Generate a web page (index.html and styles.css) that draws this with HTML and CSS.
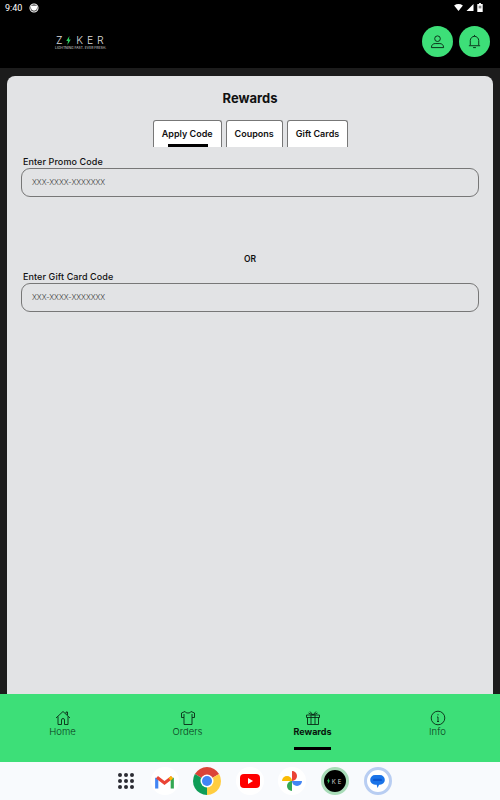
FILE: index.html

```html
<!DOCTYPE html>
<html lang="en">
<head>
  <meta charset="UTF-8">
  <title>Rewards</title>
  <link rel="stylesheet" href="styles.css">
</head>
<body>
  <div class="statusbar">
    <div class="status-left">
      <span class="clock">9:40</span>
      <svg class="status-face" viewBox="0 0 10 10" width="10" height="10"><circle cx="5" cy="5" r="4" fill="none" stroke="#fff" stroke-width="1.1"/><path d="M2 2.5h6v2.2a3 3 0 0 1-6 0z" fill="#fff"/></svg>
    </div>
    <div class="status-right">
      <svg viewBox="0 0 10 8" width="9" height="7"><path d="M0 1.6C3-.5 7-.5 10 1.6L5 8z" fill="#fff"/></svg>
      <svg viewBox="0 0 8 8" width="8" height="7"><path d="M8 0v8H0z" fill="#fff"/></svg>
      <svg class="status-batt" viewBox="0 0 6 10" width="6" height="9"><path d="M2 0h2v1h2v9H0V1h2z" fill="#fff"/><rect x="1.500" y="3" width="3" height="3" fill="#888"/></svg>
    </div>
  </div>

  <header class="topbar">
    <div class="logo">
      <div class="logo-name">Z<svg class="logo-bolt" viewBox="0 0 5 10" width="5" height="9"><path d="M3.500 0L0 5.500h2L1.200 10 5 4H3z" fill="#2ecc60"/></svg>KER</div>
      <div class="logo-tag">LIGHTNING FAST. EVER FRESH.</div>
    </div>
    <div class="top-actions">
      <button class="round-btn">
        <svg viewBox="0 0 16 16" width="15" height="15" fill="none" stroke="#0a2a16" stroke-width="1"><circle cx="8" cy="5" r="3"/><path d="M1.500 14.500c0-3 2-4.300 4-4.300h5c2 0 4 1.300 4 4.300z"/></svg>
      </button>
      <button class="round-btn">
        <svg viewBox="0 0 16 16" width="15" height="15" fill="none" stroke="#0a2a16" stroke-width="1"><path d="M3.500 12V7a4.500 4.500 0 0 1 9 0v5M2 12.500h12M8 1v1.500M6.500 14.500h3"/></svg>
      </button>
    </div>
  </header>

  <main class="page">
    <section class="card">
      <h1 class="card-title">Rewards</h1>
      <div class="tabs">
        <div class="tab tab-active">Apply Code</div>
        <div class="tab">Coupons</div>
        <div class="tab">Gift Cards</div>
      </div>
      <label class="field-label">Enter Promo Code</label>
      <div class="field">XXX-XXXX-XXXXXXX</div>
      <div class="or">OR</div>
      <label class="field-label">Enter Gift Card Code</label>
      <div class="field">XXX-XXXX-XXXXXXX</div>
    </section>
  </main>

  <nav class="bottomnav">
    <div class="nav-item">
      <svg viewBox="0 0 16 16" width="16" height="16" fill="none" stroke="#0a2a16" stroke-width="0.9"><path d="M1 8l7-6.500L15 8M3 6.500V14.500h3.500V10a1.500 1.500 0 0 1 3 0v4.500H13V6.500M11 3.500V2h1.500v3"/></svg>
      <span>Home</span>
    </div>
    <div class="nav-item">
      <svg viewBox="0 0 16 16" width="16" height="16" fill="none" stroke="#0a2a16" stroke-width="0.9"><path d="M5 1.500L1.500 3v4.500L4 7.500V14.500h8V7.500l2.500 0V3L11 1.500c-.5 2-5.500 2-6 0zM4 7.500V4M12 7.500V4"/></svg>
      <span>Orders</span>
    </div>
    <div class="nav-item nav-active">
      <svg viewBox="0 0 16 16" width="16" height="16" fill="none" stroke="#0a2a16" stroke-width="0.9"><path d="M1.500 5h13v2.500h-13zM2.500 7.500v7h11v-7M6 5v9.500M10 5v9.500M8 5L5 1.500M8 5l3-3.500M8 5L3.500 3M8 5l4.500-2"/></svg>
      <span>Rewards</span>
    </div>
    <div class="nav-item">
      <svg viewBox="0 0 16 16" width="16" height="16" fill="none" stroke="#0a2a16" stroke-width="0.9"><circle cx="8" cy="8" r="6.800"/><path d="M8 7v4.500M7 7h1M7 11.500h2M8 4.200v1.100"/></svg>
      <span>Info</span>
    </div>
  </nav>

  <footer class="dock">
    <svg class="dock-grid" viewBox="0 0 18 18" width="18" height="18" fill="#2b2b33">
      <circle cx="3" cy="3" r="2"/><circle cx="9" cy="3" r="2"/><circle cx="15" cy="3" r="2"/>
      <circle cx="3" cy="9" r="2"/><circle cx="9" cy="9" r="2"/><circle cx="15" cy="9" r="2"/>
      <circle cx="3" cy="15" r="2"/><circle cx="9" cy="15" r="2"/><circle cx="15" cy="15" r="2"/>
    </svg>
    <div class="app-icon">
      <svg viewBox="0 0 20 16" width="19" height="15" fill="none" stroke-width="3.400"><path d="M1.700 15.500V4" stroke="#4285f4"/><path d="M18.300 15.500V4" stroke="#34a853"/><path d="M2 3.500L10 9.500l8-6" stroke="#ea4335"/><path d="M15.500 5.500L18 3.500" stroke="#fbbc04"/></svg>
    </div>
    <div class="app-icon app-bare">
      <svg viewBox="0 0 28 28" width="28" height="28"><path d="M14 14L1.880 7A14 14 0 0 1 26.120 7z" fill="#db4437"/><path d="M14 14L26.120 7A14 14 0 0 1 14 28z" fill="#ffcd40"/><path d="M14 14V28A14 14 0 0 1 1.880 7z" fill="#0f9d58"/><circle cx="14" cy="14" r="6.500" fill="#fff"/><circle cx="14" cy="14" r="5" fill="#4285f4"/></svg>
    </div>
    <div class="app-icon">
      <svg viewBox="0 0 20 14" width="20" height="14"><rect width="20" height="14" rx="4" fill="#f00"/><path d="M8 4l5 3-5 3z" fill="#fff"/></svg>
    </div>
    <div class="app-icon">
      <svg viewBox="0 0 20 20" width="20" height="20"><path d="M10 10H0a5 5 0 0 1 10 0z" fill="#fbbc04"/><path d="M10 10V0a5 5 0 0 1 0 10z" fill="#ea4335"/><path d="M10 10h10a5 5 0 0 1-10 0z" fill="#4285f4"/><path d="M10 10v10a5 5 0 0 1 0-10z" fill="#34a853"/></svg>
    </div>
    <div class="app-icon app-ziker"><svg viewBox="0 0 5 10" width="3" height="6"><path d="M3.500 0L0 5.500h2L1.200 10 5 4H3z" fill="#2ecc60"/></svg>KE</div>
    <div class="app-icon app-messages">
      <svg viewBox="0 0 18 16" width="15" height="13"><path d="M6 0h6a6 6 0 0 1 6 6 6 6 0 0 1-6 6h-1l-2 4-1-4H6A6 6 0 0 1 6 0z" fill="#1a73e8"/><rect x="3.500" y="4.500" width="11" height="3" rx="1.500" fill="#0b57d0"/></svg>
    </div>
  </footer>
</body>
</html>
```

FILE: styles.css

```css
* {
  box-sizing: border-box;
}
body {
  margin: 0;
  height: 800px;
  display: flex;
  flex-direction: column;
  font-family: Inter, "Liberation Sans", sans-serif;
  background-color: #000;
  color: #111;
  overflow: hidden;
}
.statusbar {
  height: 24px;
  padding: 0 17px 9px 5px;
  display: flex;
  align-items: center;
  justify-content: space-between;
  color: #fff;
  font-size: 9px;
  font-family: Roboto, sans-serif;
}
.status-left, .status-right {
  display: flex;
  align-items: center;
  gap: 7px;
}
.status-right {
  gap: 3px;
}
.topbar {
  height: 44px;
  padding: 2px 10px 0 56px;
  display: flex;
  align-items: flex-start;
  justify-content: space-between;
}
.logo {
  color: #ddd;
  margin-top: 9px;
}
.logo-name {
  display: flex;
  align-items: center;
  font-size: 10.500px;
  line-height: 11px;
  letter-spacing: 3.800px;
  font-weight: 300;
}
.logo-bolt {
  margin-right: 5px;
}
.logo-tag {
  font-size: 3.400px;
  line-height: 5px;
  white-space: nowrap;
  margin-left: -1px;
}
.top-actions {
  display: flex;
  gap: 6px;
}
.round-btn {
  width: 31px;
  height: 31px;
  padding: 0;
  border: none;
  border-radius: 50%;
  background-color: #3ddf78;
  display: flex;
  align-items: center;
  justify-content: center;
}
.page {
  flex: 1;
  padding: 8px 7px 0;
  background-color: #1c1c1c;
  display: flex;
  min-height: 0;
}
.card {
  flex: 1;
  padding: 14px 14px 0;
  background-color: #e2e3e5;
  border-radius: 8px 8px 0 0;
}
.card-title {
  margin: 0 0 14px;
  font-size: 13px;
  line-height: 16px;
  font-weight: 700;
  text-align: center;
}
.tabs {
  display: flex;
  justify-content: center;
  gap: 4px;
  padding-left: 1px;
}
.tab {
  position: relative;
  height: 27px;
  padding: 0 8px 2px;
  display: flex;
  align-items: center;
  background-color: #fff;
  border: 1px solid #777;
  border-bottom: none;
  border-radius: 3px 3px 0 0;
  font-size: 9px;
  font-weight: 600;
}
.tab-active::after {
  content: "";
  position: absolute;
  left: 14px;
  right: 13px;
  bottom: 0;
  height: 3px;
  background-color: #000;
}
.field-label {
  display: block;
  margin: 9px 0 0 2px;
  font-size: 9px;
  line-height: 11px;
  font-weight: 500;
  letter-spacing: 0.1px;
}
.field {
  height: 29px;
  margin-top: 1px;
  padding: 0 10px;
  display: flex;
  align-items: center;
  border: 1px solid #777;
  border-radius: 9px;
  font-size: 7.300px;
  font-weight: 300;
  color: #333;
}
.or {
  margin-top: 57px;
  margin-bottom: -3px;
  text-align: center;
  font-size: 8.500px;
  line-height: 11px;
  font-weight: 600;
}
.bottomnav {
  height: 68px;
  padding-top: 16px;
  background-color: #3ddf78;
  display: grid;
  grid-template-columns: repeat(4, 1fr);
}
.nav-item {
  position: relative;
  display: flex;
  flex-direction: column;
  align-items: center;
  color: #0a3a1c;
  font-size: 9.500px;
  line-height: 11px;
  font-weight: 300;
}
.nav-item.nav-active {
  font-weight: 700;
  font-size: 9px;
  color: #07140c;
}
.nav-active::after {
  content: "";
  position: absolute;
  left: 44px;
  width: 37px;
  top: 37px;
  height: 3px;
  background-color: #000;
}
.dock {
  height: 38px;
  background-color: #f8fafd;
  display: flex;
  align-items: center;
  padding-left: 117px;
  gap: 14.600px;
}
.dock-grid {
  margin-right: 1px;
}
.app-icon {
  width: 28px;
  height: 28px;
  border-radius: 50%;
  background-color: #fff;
  display: flex;
  align-items: center;
  justify-content: center;
  flex: none;
}
.app-bare {
  background: none;
}
.app-ziker {
  background-color: #000;
  border: 3px solid #a8dcb8;
  color: #ccc;
  font-size: 6px;
  gap: 2px;
  letter-spacing: 2px;
}
.app-messages {
  background-color: #fff;
  border: 3px solid #b8cdf2;
}
```
